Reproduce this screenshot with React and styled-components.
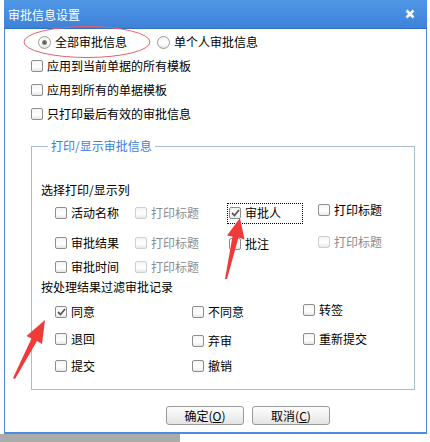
import React from 'react';
import styled, { createGlobalStyle } from 'styled-components';

const GlobalStyle = createGlobalStyle`
  body {
    margin: 0;
    background: #fff;
    font-family: "Noto Sans CJK SC", "Noto Sans", sans-serif;
    font-size: 12px;
  }
`;

const Page = styled.div`
  position: relative;
  width: 430px;
  height: 442px;
  overflow: hidden;
`;

const Dialog = styled.div`
  margin-left: 4px;
  width: 423px;
  height: 434px;
  box-sizing: border-box;
  border: 1px solid #4a8de0;
  border-top: none;
  border-bottom-width: 2px;
  background: #fff;
  display: flex;
  flex-direction: column;
`;

const TitleBar = styled.div`
  height: 28px;
  flex: none;
  margin: 0 -1px;
  background: linear-gradient(#5097e6, #3e82d9);
  border-bottom: 1px solid #2f6fc2;
  display: flex;
  align-items: center;
  justify-content: space-between;
  padding: 0 12px 0 4px;
  color: #fff;
  font-size: 12px;
`;

const Body = styled.div`
  padding: 1px 0 0 26px;
  display: flex;
  flex-direction: column;
`;

const Row = styled.div`
  height: 24px;
  display: flex;
  align-items: center;
  gap: ${p => p.$gap || 0}px;
  padding-left: ${p => p.$indent || 0}px;
`;

const Item = styled.label`
  display: flex;
  align-items: center;
  gap: 4px;
  color: ${p => (p.$disabled ? '#8c8c8c' : '#000')};
  white-space: nowrap;
  line-height: 16px;
`;

const Box = styled.span`
  width: 12px;
  height: 12px;
  box-sizing: border-box;
  border: 1px solid ${p => (p.$disabled ? '#cfcfcf' : '#8e8e8e')};
  border-radius: 2px;
  background: linear-gradient(#f4f4f4, #fff 60%, #e6e6e6);
  display: flex;
  align-items: center;
  justify-content: center;
  flex: none;
`;

const Circle = styled.span`
  width: 13px;
  height: 13px;
  box-sizing: border-box;
  border: 1px solid #9a9a9a;
  border-radius: 50%;
  background: linear-gradient(#f2f2f2, #fff 60%, #e2e2e2);
  display: flex;
  align-items: center;
  justify-content: center;
  flex: none;

  &::after {
    content: '';
    width: 5px;
    height: 5px;
    border-radius: 50%;
    background: ${p => (p.$on ? 'radial-gradient(#555, #999)' : 'transparent')};
  }
`;

const Group = styled.fieldset`
  margin: 12px 0 0 0;
  width: 384px;
  box-sizing: border-box;
  border: 1px solid #a7bcd6;
  padding: 0 0 11px 9px;
`;

const Legend = styled.legend`
  color: #3a7fd8;
  padding: 0 3px;
  margin-left: 7px;
  line-height: 16px;
`;

const Caption = styled.div`
  line-height: 16px;
  margin-top: ${p => p.$top || 0}px;
`;

const ColGrid = styled.div`
  margin-top: 3px;
  margin-left: 14px;
  display: grid;
  grid-template-columns: 80px 94px 89px auto;
  grid-template-rows: 30px 24px 24px;
  align-items: start;
`;

const FilterGrid = styled.div`
  margin-top: 5px;
  margin-left: 14px;
  display: grid;
  grid-template-columns: 137px 111px auto;
  grid-auto-rows: 24px;
  row-gap: 3px;
  align-items: center;
`;

const Cell = styled.div`
  height: ${p => p.$h || 24}px;
  display: flex;
  align-items: center;
  transform: translateY(${p => p.$dy || 0}px);
`;

const Focus = styled.div`
  height: 21px;
  width: 76px;
  box-sizing: border-box;
  margin-left: -2px;
  padding-left: 1px;
  border: 1px dotted #000;
  display: flex;
  align-items: center;
`;

const Buttons = styled.div`
  display: flex;
  gap: 8px;
  margin: 16px 0 0 135px;
`;

const Button = styled.button`
  width: ${p => p.$w}px;
  height: 19px;
  padding: 0;
  border: 1px solid #9a9a9a;
  border-radius: 3px;
  background: linear-gradient(#fdfdfd, #f1f1f1 50%, #e4e4e4);
  font: inherit;
  font-size: 12px;
  color: #000;
  line-height: 17px;

  u {
    text-decoration: underline;
  }
`;

const BottomStrip = styled.div`
  height: 8px;
  width: 180px;
  background: #ababab;
`;

const Overlay = styled.svg`
  position: absolute;
  left: 0;
  top: 0;
  pointer-events: none;
`;

const Check = () => (
  <svg width="9" height="8" viewBox="0 0 9 8">
    <path d="M1 4 L3.5 6.5 L8 1" fill="none" stroke="#5a5a5a" strokeWidth="1.8" />
  </svg>
);

const CheckBox = ({ label, checked, disabled }) => (
  <Item $disabled={disabled}>
    <Box $disabled={disabled}>{checked && <Check />}</Box>
    {label}
  </Item>
);

const Radio = ({ label, on }) => (
  <Item>
    <Circle $on={on} />
    {label}
  </Item>
);

const CloseIcon = () => (
  <svg width="10" height="10" viewBox="0 0 10 10">
    <path d="M1.5 1.5 L8.5 8.5 M8.5 1.5 L1.5 8.5" stroke="#fff" strokeWidth="2.6" />
  </svg>
);

export default function App() {
  return (
    <Page>
      <GlobalStyle />
      <Dialog>
        <TitleBar>
          <span>审批信息设置</span>
          <CloseIcon />
        </TitleBar>
        <Body>
          <Row $indent={7} $gap={30}>
            <Radio label="全部审批信息" on />
            <Radio label="单个人审批信息" />
          </Row>
          <Row>
            <CheckBox label="应用到当前单据的所有模板" />
          </Row>
          <Row>
            <CheckBox label="应用到所有的单据模板" />
          </Row>
          <Row>
            <CheckBox label="只打印最后有效的审批信息" />
          </Row>

          <Group>
            <Legend>打印/显示审批信息</Legend>
            <Caption $top={28}>选择打印/显示列</Caption>
            <ColGrid>
              <Cell><CheckBox label="活动名称" /></Cell>
              <Cell><CheckBox label="打印标题" disabled /></Cell>
              <Cell><Focus><CheckBox label="审批人" checked /></Focus></Cell>
              <Cell $dy={-3}><CheckBox label="打印标题" /></Cell>

              <Cell><CheckBox label="审批结果" /></Cell>
              <Cell><CheckBox label="打印标题" disabled /></Cell>
              <Cell $dy={1}><CheckBox label="批注" /></Cell>
              <Cell $dy={-1}><CheckBox label="打印标题" disabled /></Cell>

              <Cell><CheckBox label="审批时间" /></Cell>
              <Cell><CheckBox label="打印标题" disabled /></Cell>
            </ColGrid>

            <Caption>按处理结果过滤审批记录</Caption>
            <FilterGrid>
              <Cell><CheckBox label="同意" checked /></Cell>
              <Cell><CheckBox label="不同意" /></Cell>
              <Cell $dy={-2}><CheckBox label="转签" /></Cell>

              <Cell><CheckBox label="退回" /></Cell>
              <Cell $dy={2}><CheckBox label="弃审" /></Cell>
              <Cell><CheckBox label="重新提交" /></Cell>

              <Cell><CheckBox label="提交" /></Cell>
              <Cell><CheckBox label="撤销" /></Cell>
            </FilterGrid>
          </Group>

          <Buttons>
            <Button $w={78}>确定(<u>O</u>)</Button>
            <Button $w={78}>取消(<u>C</u>)</Button>
          </Buttons>
        </Body>
      </Dialog>
      <BottomStrip />

      <Overlay width="430" height="442" viewBox="0 0 430 442">
        <ellipse cx="87" cy="42" rx="63" ry="15.5" fill="none" stroke="#e4606c" strokeWidth="1" />
        <polygon
          fill="#f03a3a"
          points="240,218 244.5,239.5 238.5,237.5 227,279 225,279 232.5,236.5 227,235.5"
        />
        <polygon
          fill="#f03a3a"
          points="45,320 42,344 37,341 15,379 13,378 31.5,338.5 26.5,336"
        />
      </Overlay>
    </Page>
  );
}
